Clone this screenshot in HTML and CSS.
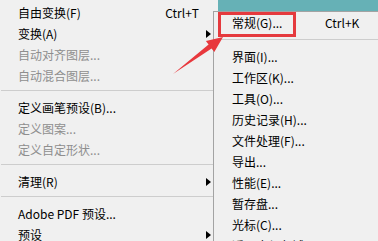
FILE: index.html
```html
<!DOCTYPE html>
<html lang="zh-CN">
<head>
<meta charset="utf-8">
<title>Menu</title>
<link rel="stylesheet" href="styles.css">
</head>
<body>
<div class="screen">
  <div class="menu main-menu">
    <div class="item"><span class="label">自由变换(F)</span><span class="key">Ctrl+T</span><span class="arrow-cell"></span></div>
    <div class="item"><span class="label">变换(A)</span><span class="key"></span><span class="arrow-cell"><i class="tri"></i></span></div>
    <div class="item disabled"><span class="label">自动对齐图层...</span><span class="key"></span><span class="arrow-cell"></span></div>
    <div class="item disabled"><span class="label">自动混合图层...</span><span class="key"></span><span class="arrow-cell"></span></div>
    <div class="sep"></div>
    <div class="item"><span class="label">定义画笔预设(B)...</span><span class="key"></span><span class="arrow-cell"></span></div>
    <div class="item disabled"><span class="label">定义图案...</span><span class="key"></span><span class="arrow-cell"></span></div>
    <div class="item disabled"><span class="label">定义自定形状...</span><span class="key"></span><span class="arrow-cell"></span></div>
    <div class="sep"></div>
    <div class="item"><span class="label">清理(R)</span><span class="key"></span><span class="arrow-cell"><i class="tri"></i></span></div>
    <div class="sep"></div>
    <div class="item"><span class="label">Adobe PDF 预设...</span><span class="key"></span><span class="arrow-cell"></span></div>
    <div class="item"><span class="label">预设</span><span class="key"></span><span class="arrow-cell"><i class="tri"></i></span></div>
  </div>

  <div class="menu submenu">
    <div class="item"><span class="label">常规(G)...</span><span class="key">Ctrl+K</span></div>
    <div class="sep"></div>
    <div class="item"><span class="label">界面(I)...</span><span class="key"></span></div>
    <div class="item"><span class="label">工作区(K)...</span><span class="key"></span></div>
    <div class="item"><span class="label">工具(O)...</span><span class="key"></span></div>
    <div class="item"><span class="label">历史记录(H)...</span><span class="key"></span></div>
    <div class="item"><span class="label">文件处理(F)...</span><span class="key"></span></div>
    <div class="item"><span class="label">导出...</span><span class="key"></span></div>
    <div class="item"><span class="label">性能(E)...</span><span class="key"></span></div>
    <div class="item"><span class="label">暂存盘...</span><span class="key"></span></div>
    <div class="item"><span class="label">光标(C)...</span><span class="key"></span></div>
    <div class="item"><span class="label">透明度与色域(T)...</span><span class="key"></span></div>
  </div>

  <div class="highlight-box"></div>

  <svg class="pointer" width="378" height="241" viewBox="0 0 378 241" aria-hidden="true">
    <polygon points="173,74 211.6,48.5 214.3,52.1 223,37 205.9,40.9 208.6,44.5" fill="#e8383d"/>
  </svg>
</div>
</body>
</html>
```

FILE: styles.css
```css
html, body {
  margin: 0;
  padding: 0;
}

body {
  width: 378px;
  height: 241px;
  overflow: hidden;
  background: #66b1b6;
  font-family: "Noto Sans CJK SC", "Noto Sans", sans-serif;
  font-size: 12px;
  color: #000;
}

.screen {
  position: relative;
  width: 378px;
  height: 241px;
  overflow: hidden;
}

.menu {
  background: #f0f0f0;
  box-sizing: border-box;
}

.main-menu {
  width: 218px;
  height: 241px;
  padding-top: 2px;
  padding-left: 18px;
}

.item {
  height: 21px;
  display: grid;
  align-items: center;
  white-space: nowrap;
  line-height: 21px;
}

.main-menu .item {
  grid-template-columns: 1fr auto 19px;
}

.disabled {
  color: #8e8e8e;
}

.key {
  text-align: right;
}

.arrow-cell {
  display: flex;
  align-items: center;
  height: 21px;
}

.tri {
  display: block;
  width: 0;
  height: 0;
  margin-left: 7px;
  border-top: 4px solid transparent;
  border-bottom: 4px solid transparent;
  border-left: 5px solid #000;
}

.sep {
  height: 1px;
  background: #cdcdcd;
  margin: 4px 0 6px -17px;
}

.submenu {
  position: absolute;
  left: 213px;
  top: 11px;
  width: 200px;
  height: 240px;
  border-left: 1px solid #a3a3a3;
  border-top: 1px solid #a3a3a3;
  padding-left: 18px;
}

.submenu .item {
  grid-template-columns: 93px auto 1fr;
}

.submenu .sep {
  margin: 6px 0 6px -18px;
}

.highlight-box {
  position: absolute;
  left: 218px;
  top: 12px;
  width: 78px;
  height: 25px;
  box-sizing: border-box;
  border: 3px solid #e53a3e;
}

.pointer {
  position: absolute;
  left: 0;
  top: 0;
  pointer-events: none;
}
```
